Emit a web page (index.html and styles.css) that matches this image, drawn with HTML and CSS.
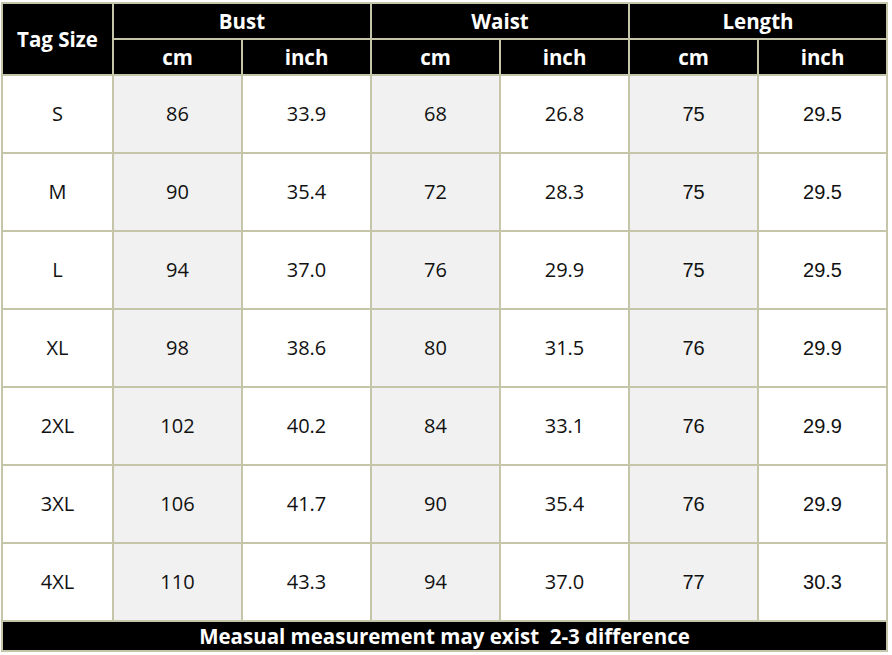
FILE: index.html
```html
<!DOCTYPE html>
<html lang="en">
<head>
<meta charset="utf-8">
<title>Size Chart</title>
<link rel="stylesheet" href="styles.css">
</head>
<body>
<div class="chart">
  <div class="hd tag">Tag Size</div>
  <div class="hd group">Bust</div>
  <div class="hd group">Waist</div>
  <div class="hd group">Length</div>
  <div class="hd unit">cm</div><div class="hd unit">inch</div>
  <div class="hd unit">cm</div><div class="hd unit">inch</div>
  <div class="hd unit">cm</div><div class="hd unit">inch</div>

  <div class="c size">S</div><div class="c g">86</div><div class="c">33.9</div><div class="c g">68</div><div class="c">26.8</div><div class="c g ar">75</div><div class="c ar">29.5</div>
  <div class="c size">M</div><div class="c g">90</div><div class="c">35.4</div><div class="c g">72</div><div class="c">28.3</div><div class="c g ar">75</div><div class="c ar">29.5</div>
  <div class="c size">L</div><div class="c g">94</div><div class="c">37.0</div><div class="c g">76</div><div class="c">29.9</div><div class="c g ar">75</div><div class="c ar">29.5</div>
  <div class="c size">XL</div><div class="c g">98</div><div class="c">38.6</div><div class="c g">80</div><div class="c">31.5</div><div class="c g ar">76</div><div class="c ar">29.9</div>
  <div class="c size">2XL</div><div class="c g">102</div><div class="c">40.2</div><div class="c g">84</div><div class="c">33.1</div><div class="c g ar">76</div><div class="c ar">29.9</div>
  <div class="c size">3XL</div><div class="c g">106</div><div class="c">41.7</div><div class="c g">90</div><div class="c">35.4</div><div class="c g ar">76</div><div class="c ar">29.9</div>
  <div class="c size">4XL</div><div class="c g">110</div><div class="c">43.3</div><div class="c g">94</div><div class="c">37.0</div><div class="c g ar">77</div><div class="c ar">30.3</div>

  <div class="hd foot">Measual measurement may exist&nbsp; 2-3 difference</div>
</div>
</body>
</html>
```
FILE: styles.css
```css
html, body {
  margin: 0;
  padding: 0;
  background: #ffffff;
}
body {
  padding: 2px 0 0 1px;
}
.chart {
  display: grid;
  width: 887px;
  box-sizing: border-box;
  padding: 2px;
  gap: 2px;
  background: #c5c5a9;
  grid-template-columns: 109px repeat(6, 127px);
  grid-template-rows: 34px 34px repeat(7, 76px) 28px;
  font-family: "Open Sans", "Noto Sans", sans-serif;
}
.hd {
  background: #000000;
  color: #ffffff;
  font-weight: 700;
  font-size: 20.5px;
  display: flex;
  align-items: center;
  justify-content: center;
  line-height: 1;
}
.tag {
  grid-row: span 2;
}
.group {
  grid-column: span 2;
}
.c {
  background: #ffffff;
  color: #111111;
  font-size: 20px;
  display: flex;
  align-items: center;
  justify-content: center;
  line-height: 1;
}
.c.g {
  background: #f1f1f1;
}
.c.ar {
  font-family: "Liberation Sans", Arial, sans-serif;
}
.foot {
  grid-column: 1 / -1;
}
```
